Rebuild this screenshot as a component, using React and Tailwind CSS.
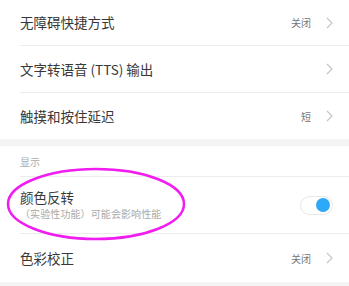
import React from "react";

const Chevron = () => (
  <svg width="7" height="12" viewBox="0 0 7 12" className="ml-[15px]">
    <path d="M1 1 L6 6 L1 11" fill="none" stroke="#c4c4c4" strokeWidth="1.1" />
  </svg>
);

export default function App() {
  return (
    <div
      className="w-[349px] h-[286px] bg-white overflow-hidden relative"
      style={{ fontFamily: '"Noto Sans CJK SC", "Noto Sans", sans-serif' }}
    >
      <div className="ml-5 border-b border-[#ececec]">
        <div className="-ml-5 flex items-center pl-5 pr-[16px] h-[45px]">
          <span className="flex-1 text-[13.5px] text-[#383838]">无障碍快捷方式</span>
          <span className="text-[10px] text-[#777]">关闭</span>
          <Chevron />
        </div>
      </div>
      <div className="ml-5 border-b border-[#ececec]">
        <div className="-ml-5 flex items-center pl-5 pr-[16px] h-[46px]">
          <span className="flex-1 text-[13.5px] text-[#383838]">文字转语音 (TTS) 输出</span>
          <Chevron />
        </div>
      </div>
      <div className="flex items-center pl-5 pr-[16px] h-[46px]">
        <span className="flex-1 text-[13.5px] text-[#383838]">触摸和按住延迟</span>
        <span className="text-[10px] text-[#777]">短</span>
        <Chevron />
      </div>
      <div className="h-[7px] bg-[#f4f4f4]" />
      <div className="ml-5 border-b border-[#ececec] h-[31px] flex items-center">
        <span className="text-[10px] text-[#aaa]">显示</span>
      </div>
      <div className="ml-5 border-b border-[#ececec]">
        <div className="flex items-center pr-[16px] h-[56px]">
          <div className="flex-1 flex flex-col">
            <span className="text-[13.5px] text-[#383838] leading-[18px]">颜色反转</span>
            <span className="text-[10px] text-[#aaa] leading-[16px] tracking-[0.1px]">（实验性功能）可能会影响性能</span>
          </div>
          <div className="w-[33px] h-[19px] rounded-full border border-[#e6e6e6] bg-white flex items-center justify-end pr-[2px]">
            <div className="w-[14px] h-[14px] rounded-full bg-[#2ea9f7]" />
          </div>
        </div>
      </div>
      <div className="flex items-center pl-5 pr-[16px] h-[48px]">
        <span className="flex-1 text-[13.5px] text-[#383838]">色彩校正</span>
        <span className="text-[10px] text-[#777]">关闭</span>
        <Chevron />
      </div>
      <div className="h-[10px] bg-[#f4f4f4]" />
      <svg className="absolute left-0 top-0 pointer-events-none" width="349" height="286">
        <ellipse cx="96" cy="204" rx="88" ry="35" fill="none" stroke="#f01cf0" strokeWidth="2.5" />
      </svg>
    </div>
  );
}
